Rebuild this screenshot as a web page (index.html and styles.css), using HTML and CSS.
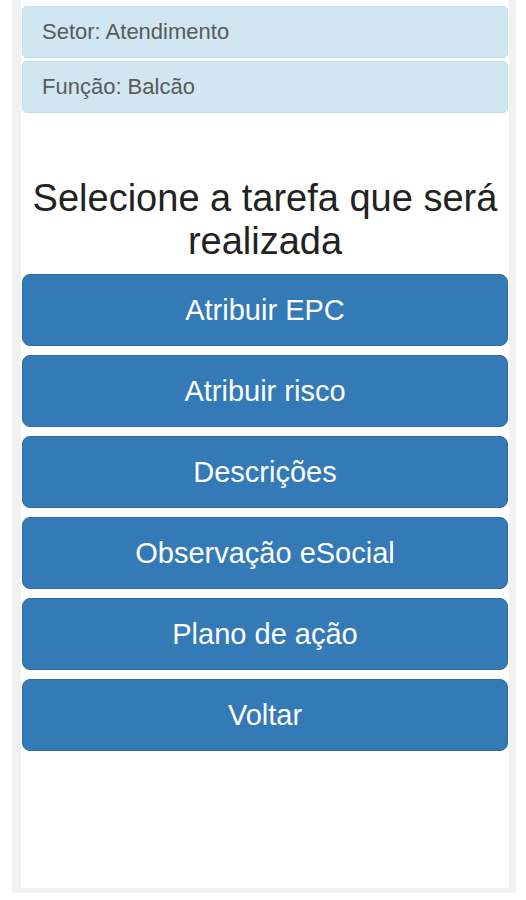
FILE: index.html
```html
<!DOCTYPE html>
<html lang="pt-BR">
<head>
<meta charset="utf-8">
<title>Tarefas</title>
<link rel="stylesheet" href="styles.css">
</head>
<body>
<div class="frame">
  <main class="panel">
    <div class="info">Setor: Atendimento</div>
    <div class="info">Função: Balcão</div>
    <h1 class="title">Selecione a tarefa que será realizada</h1>
    <nav class="actions">
      <a class="btn" href="#">Atribuir EPC</a>
      <a class="btn" href="#">Atribuir risco</a>
      <a class="btn" href="#">Descrições</a>
      <a class="btn" href="#">Observação eSocial</a>
      <a class="btn" href="#">Plano de ação</a>
      <a class="btn" href="#">Voltar</a>
    </nav>
  </main>
</div>
</body>
</html>
```
FILE: styles.css
```css
html, body {
  margin: 0;
  padding: 0;
  background: #ffffff;
}
body {
  font-family: "Liberation Sans", Arial, sans-serif;
  width: 526px;
  height: 900px;
}
.frame {
  margin-left: 12px;
  width: 504px;
  height: 893px;
  background: #f1f1f1;
  padding-left: 9px;
  box-sizing: border-box;
}
.panel {
  width: 488px;
  height: 888px;
  background: #ffffff;
  box-sizing: border-box;
  padding: 6px 1px 0 1px;
  display: flex;
  flex-direction: column;
}
.info {
  background: #d0e7f1;
  border: 1px solid #c3dde8;
  border-radius: 5px;
  color: #5a5a5a;
  font-size: 22px;
  height: 52px;
  box-sizing: border-box;
  padding: 0 19px;
  display: flex;
  align-items: center;
  margin-bottom: 3px;
}
.title {
  margin: 61px 0 11px;
  font-weight: normal;
  font-size: 38px;
  line-height: 43px;
  color: #222222;
  text-align: center;
}
.actions {
  display: flex;
  flex-direction: column;
  gap: 9px;
}
.btn {
  display: flex;
  align-items: center;
  justify-content: center;
  height: 72px;
  box-sizing: border-box;
  background: #337ab7;
  border: 1px solid #2e6da4;
  border-radius: 8px;
  color: #ffffff;
  font-size: 29px;
  text-decoration: none;
}
```
